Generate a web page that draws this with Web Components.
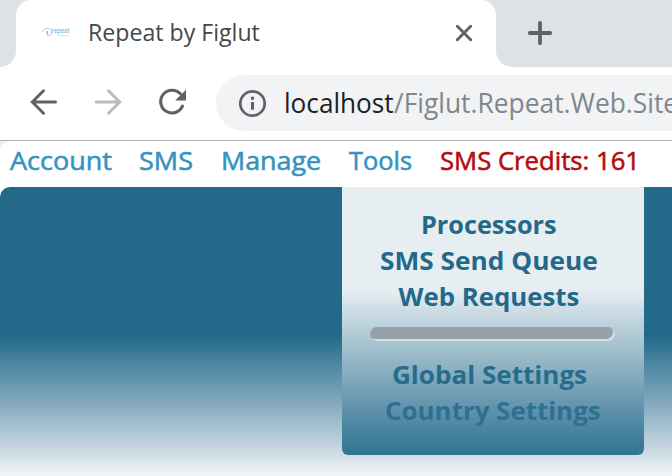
<!DOCTYPE html>
<html lang="en"><head><meta charset="utf-8"><title>Repeat by Figlut</title>
<style>html,body{margin:0;height:100%;overflow:hidden;background:#fff}body{font-family:"Open Sans","Noto Sans",sans-serif}</style></head>
<body><browser-window></browser-window>
<script>
const define=(name,html,after)=>customElements.define(name,class extends HTMLElement{
  constructor(){super();this.attachShadow({mode:'open'}).innerHTML=html;}
  connectedCallback(){if(after)after(this);}
});
/* A single line of text condensed or widened to the width attribute. */
define('fit-text',`<style>:host{display:block;flex:none;white-space:nowrap}span{display:inline-block;transform-origin:0 50%}</style><span><slot></slot></span>`,el=>{
  el.style.width=el.getAttribute('width')+'px';
  const s=el.shadowRoot.querySelector('span');
  s.style.transform='scaleX('+(+el.getAttribute('width')/s.offsetWidth)+')';
});
define('site-logo',`<style>:host{display:block;width:28px;height:12px;margin-top:-3px}svg{display:block}text{font-family:"Open Sans",sans-serif}</style>
<svg width="28" height="12" viewBox="0 0 28 12"><path d="M.5 6C1.5 3 4 2 6.5 2.5 9 3 10 5 9.5 7 9 9.5 6.5 10.5 4.8 9.3" fill="none" stroke="#8fc9df" stroke-width=".9"/><path d="M5 5v2.4l1.2.7" fill="none" stroke="#ef5960" stroke-width="1"/><text x="9.5" y="7" font-size="6.5" textLength="18" lengthAdjust="spacingAndGlyphs" fill="#5aaed0">repeat</text><path d="M16 9.7h11" stroke="#dce4e7" stroke-width="1"/></svg>`);
define('tab-strip',`<style>:host{display:flex;height:67px;background:#dee1e6}
.left{width:16px;background:#fff}.left i{display:block;height:67px;background:#dee1e6;border-bottom-right-radius:16px}
.tab{box-sizing:border-box;width:480px;height:67px;padding:0 22px 0 26px;display:flex;align-items:center;background:#fff;border-radius:15px 15px 0 0}
fit-text{margin:-3px 0 0 17.5px;font-size:23.4px;line-height:32px;color:#45474a}.close{margin:-1px 0 0 auto}
.right{flex:1;background:#fff}.right div{height:67px;box-sizing:border-box;background:#dee1e6;border-bottom-left-radius:16px;padding:20px 0 0 31px}svg{display:block}</style>
<div class="left"><i></i></div><div class="tab"><site-logo></site-logo><fit-text width="172">Repeat by Figlut</fit-text>
<svg class="close" width="20" height="20"><path d="M3.3 3.3 16.7 16.7M16.7 3.3 3.3 16.7" stroke="#5f6368" stroke-width="2.9" stroke-linecap="round"/></svg></div>
<div class="right"><div><svg width="26" height="26"><path d="M13 2.8v20.4M2.8 13h20.4" stroke="#5f6368" stroke-width="3.8" stroke-linecap="round"/></svg></div></div>`);
define('tool-bar',`<style>:host{display:flex;box-sizing:border-box;height:74px;border-bottom:1px solid #b2b2b4;padding:8px 0 9px 28px;background:#fff;overflow:hidden}
.nav{display:flex;gap:32px;width:188px;align-items:center;height:54px;flex:none}svg{display:block;flex:none}
.url{display:flex;align-items:center;box-sizing:border-box;flex:1;height:56px;background:#f1f3f4;border-radius:28px 0 0 28px;padding-left:21px;font-size:27.6px;line-height:38px;color:#202124}.url svg{margin-right:17px}fit-text{margin-top:-2px}.path{color:#80868b}</style>
<div class="nav">
<svg width="32" height="32"><path d="M27.5 16H5M15.5 4.8 4.3 16 15.5 27.2" fill="none" stroke="#5f6368" stroke-width="3" stroke-linecap="round"/></svg>
<svg width="32" height="32"><path d="M4.2 16H27M16.5 4.8 27.7 16 16.5 27.2" fill="none" stroke="#bcbcbc" stroke-width="3" stroke-linecap="round"/></svg>
<svg width="32" height="32"><path d="M24.4 7.8A11.4 11.4 0 1 0 26.5 20.2" fill="none" stroke="#5f6368" stroke-width="3.1" stroke-linecap="round"/><path d="M30 3.7V14.5H19.2Z" fill="#5f6368"/></svg></div>
<div class="url"><svg width="30" height="30"><circle cx="15.5" cy="15.5" r="12.2" fill="none" stroke="#5f6368" stroke-width="2.7"/><path d="M15.5 8.7v3M15.5 14v7.7" stroke="#5f6368" stroke-width="3"/></svg>
<fit-text width="110">localhost</fit-text><fit-text class="path" width="284">/Figlut.Repeat.Web.Site</fit-text></div>`);
define('main-menu',`<style>:host{display:flex;height:46px;padding-left:10px;box-sizing:border-box;border-top-left-radius:10px;background:#fff;font-size:25.8px;font-weight:500;-webkit-text-stroke:.55px currentColor;line-height:39px;color:#3493c0}
fit-text{margin-right:27.7px}fit-text.credits{color:#b60b0d;margin:0}</style>
<fit-text width="101.5">Account</fit-text><fit-text width="54.5">SMS</fit-text><fit-text width="100">Manage</fit-text><fit-text width="63">Tools</fit-text><fit-text class="credits" width="200">SMS Credits: 161</fit-text>`);
define('tools-menu',`<style>:host{display:flex;flex-direction:column;align-items:center;box-sizing:border-box;width:302px;height:268px;padding:19px 8px 0 0;border-radius:0 0 6px 6px;background:linear-gradient(#e7eef2 0 103px,#cddde5 123px,#a9c5d1 155px,#79a4b9 198px,#4f88a3 237px,#317492 268px);font-size:25.8px;font-weight:700;line-height:36px;color:#23698a}
.global{color:#286c8d}.country{color:#2e708f;margin-left:7px}
hr{box-sizing:border-box;width:245px;height:14px;margin:13px 0 15px;border:0;background:#96a1a8;border-radius:7px;box-shadow:inset -2px -2px #d2dfe5;position:relative;left:3.5px}</style>
<fit-text width="136">Processors</fit-text><fit-text width="218">SMS Send Queue</fit-text><fit-text width="181">Web Requests</fit-text><hr><fit-text class="global" width="195">Global Settings</fit-text><fit-text class="country" width="216">Country Settings</fit-text>`);
define('page-body',`<style>:host{display:block;box-sizing:border-box;height:289px;padding-left:342px;border-top-left-radius:10px;background:linear-gradient(#23698a 0 149px,#578ea7 185px,#81a7bd 214px,#a5c2cf 239px,#c0d1de 257px,#dce6ec 275px,#f0f4f7 289px)}</style><tools-menu></tools-menu>`);
define('browser-window',`<style>:host{display:block;width:672px;height:476px;overflow:hidden;background:#fff}.page{background:linear-gradient(90deg,#eee 10px,#fff 10px)}</style><tab-strip></tab-strip><tool-bar></tool-bar><div class="page"><main-menu></main-menu></div><page-body></page-body>`);
</script></body></html>
